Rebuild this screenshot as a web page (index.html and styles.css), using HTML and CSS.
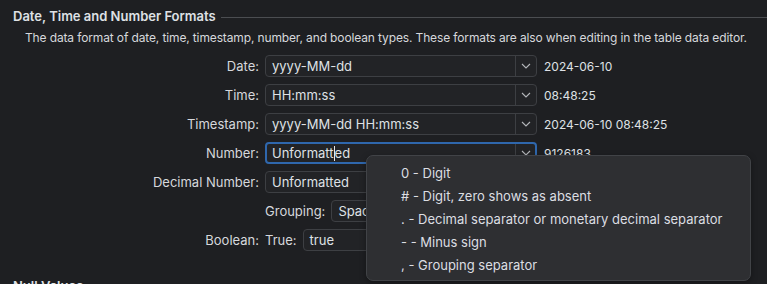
FILE: index.html
```html
<!DOCTYPE html>
<html lang="en">
	<head>
		<meta charset="UTF-8">
		<title>Data Formats</title>
		<link rel="stylesheet" href="styles.css">
	</head>
	<body>
		<div class="page">
			<div class="group-title">
				<span>Date, Time and Number Formats</span>
				<div class="rule"></div>
			</div>
			<p class="desc">The data format of date, time, timestamp, number, and boolean types. These formats are also when editing in the table data editor.</p>
			<div class="form">
				<label class="lbl">Date:</label>
				<div class="field">
					<div class="combo"><span class="txt">yyyy-MM-dd</span><span class="arrow"><svg width="10" height="6" viewBox="0 0 10 6"><path d="M1 1l4 4 4-4" fill="none" stroke="#b4b6ba" stroke-width="1.1"/></svg></span></div>
					<span class="sample">2024-06-10</span>
				</div>

				<label class="lbl">Time:</label>
				<div class="field">
					<div class="combo"><span class="txt">HH:mm:ss</span><span class="arrow"><svg width="10" height="6" viewBox="0 0 10 6"><path d="M1 1l4 4 4-4" fill="none" stroke="#b4b6ba" stroke-width="1.1"/></svg></span></div>
					<span class="sample">08:48:25</span>
				</div>

				<label class="lbl">Timestamp:</label>
				<div class="field">
					<div class="combo"><span class="txt">yyyy-MM-dd HH:mm:ss</span><span class="arrow"><svg width="10" height="6" viewBox="0 0 10 6"><path d="M1 1l4 4 4-4" fill="none" stroke="#b4b6ba" stroke-width="1.1"/></svg></span></div>
					<span class="sample">2024-06-10 08:48:25</span>
				</div>

				<label class="lbl">Number:</label>
				<div class="field">
					<div class="combo focused"><span class="txt">Unformatt<span class="caret"></span>ed</span><span class="arrow"><svg width="10" height="6" viewBox="0 0 10 6"><path d="M1 1l4 4 4-4" fill="none" stroke="#b4b6ba" stroke-width="1.1"/></svg></span></div>
					<span class="sample">9126183</span>
				</div>

				<label class="lbl">Decimal Number:</label>
				<div class="field">
					<div class="combo"><span class="txt">Unformatted</span><span class="arrow"><svg width="10" height="6" viewBox="0 0 10 6"><path d="M1 1l4 4 4-4" fill="none" stroke="#b4b6ba" stroke-width="1.1"/></svg></span></div>
				</div>

				<span></span>
				<div class="field">
					<label class="sub-lbl">Grouping:</label>
					<div class="combo short"><span class="txt">Space</span></div>
				</div>

				<label class="lbl">Boolean:</label>
				<div class="field">
					<label class="sub-lbl">True:</label>
					<div class="input short"><span class="txt">true</span></div>
				</div>
			</div>
			<div class="group-title next">
				<span>Null Values</span>
				<div class="rule"></div>
			</div>

			<div class="popup">
				<p>0 - Digit</p>
				<p># - Digit, zero shows as absent</p>
				<p>. - Decimal separator or monetary decimal separator</p>
				<p>- - Minus sign</p>
				<p>, - Grouping separator</p>
			</div>
		</div>
	</body>
</html>
```

FILE: styles.css
```css
*{
	margin: 0;
	padding: 0;
	box-sizing: border-box;
}
html, body{
	height: 100%;
	overflow: hidden;
	background: #1e1f22;
}
body{
	font-family: "Inter", "Noto Sans", sans-serif;
	font-size: 13px;
	color: #dfe1e5;
}
.page{
	position: relative;
	height: 284px;
	overflow: hidden;
}
.group-title{
	display: flex;
	align-items: center;
	gap: 5px;
	margin: 7px 0 0 13px;
	line-height: 18px;
	font-weight: 600;
}
.group-title .rule{
	flex: 1;
	height: 1px;
	background: #4b4d51;
	margin-top: 2px;
}
.group-title.next{
	margin-top: 26px;
}
.desc{
	margin: 4px 0 0 25px;
	line-height: 18px;
	font-size: 12px;
	letter-spacing: -0.13px;
	white-space: nowrap;
	color: #d6d8dc;
}
.form{
	display: grid;
	grid-template-columns: 246px 1fr;
	column-gap: 6px;
	row-gap: 7px;
	margin: 8px 0 0 13px;
}
.lbl{
	text-align: right;
	line-height: 22px;
	color: #d6d8dc;
}
.field{
	display: flex;
	align-items: center;
	gap: 6px;
	height: 22px;
}
.sub-lbl{
	color: #d6d8dc;
	line-height: 22px;
}
.combo, .input{
	display: flex;
	align-items: center;
	width: 272px;
	height: 22px;
	border: 1px solid #3d3f43;
	border-radius: 4px;
	background: #222326;
}
.combo.short, .input.short{
	width: 150px;
}
.combo .txt, .input .txt{
	flex: 1;
	padding-left: 6px;
	white-space: nowrap;
	position: relative;
}
.arrow{
	width: 21px;
	height: 100%;
	border-left: 1px solid #3d3f43;
	display: flex;
	align-items: center;
	justify-content: center;
}
.combo.focused{
	border: 2px solid #2f67ad;
}
.combo.focused .txt{
	padding-left: 5px;
}
.combo.focused .arrow{
	margin-right: -1px;
}
.caret{
	display: inline-block;
	width: 1px;
	height: 15px;
	background: #e6e6e6;
	vertical-align: -3px;
}
.sample{
	margin-left: 1px;
	font-size: 12px;
	color: #dfe1e5;
}
.popup{
	position: absolute;
	left: 366px;
	top: 155px;
	width: 385px;
	height: 126px;
	padding: 6px 0 0 34px;
	background: #2e2f32;
	border: 1px solid #414347;
	border-radius: 7px;
	box-shadow: 0 2px 6px rgba(0, 0, 0, 0.35);
}
.popup p{
	line-height: 23px;
	color: #dcdee2;
}
```
